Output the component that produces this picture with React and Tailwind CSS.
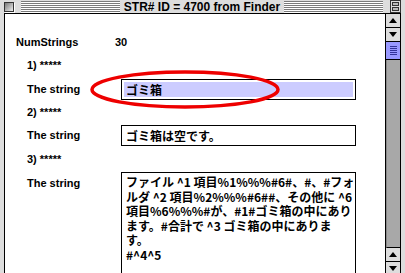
import React from 'react';

const font = { fontFamily: '"Liberation Sans", "Noto Sans CJK JP", sans-serif' };
const jp = { fontFamily: '"Noto Sans CJK JP", "Liberation Sans", sans-serif' };

const Stripes = () => (
  <div className="flex-1 h-[12px] bg-[repeating-linear-gradient(to_bottom,#7a7a7a_0px,#7a7a7a_1px,#ffffff_1px,#ffffff_2px)]" />
);

const Arrow = ({ up }) => (
  <div className="h-[14px] bg-[#dddddd] border-b border-black flex items-center justify-center">
    <svg width="8" height="5" viewBox="0 0 8 5">
      {up ? <polygon points="0,5 8,5 4,0" fill="#000" /> : <polygon points="0,0 8,0 4,5" fill="#000" />}
    </svg>
  </div>
);

const Field = ({ children, hilite, className = '' }) => (
  <div className={`w-[235px] border border-black bg-white ${className}`}>
    <div className={`m-[2px] px-[2px] ${hilite ? 'bg-[#ccccff]' : ''}`}>{children}</div>
  </div>
);

export default function App() {
  return (
    <div className="w-[405px] h-[273px] bg-[#dddddd] flex flex-col overflow-hidden text-black" style={font}>
      <div className="h-[20px] flex items-center pl-[4px] pr-[4px] gap-[3px]">
        <div className="w-[10px] h-[10px] border border-[#333] bg-[linear-gradient(135deg,#777,#eee)] mr-[4px] shadow-[1px_1px_0_#fff]" />
        <Stripes />
        <div className="text-[12px] font-bold leading-none px-[1px] whitespace-nowrap">STR# ID = 4700 from Finder</div>
        <Stripes />
        <svg width="11" height="13" viewBox="0 0 11 13" className="ml-[4px]">
          <rect x="0.5" y="0.5" width="10" height="12" fill="#ddd" stroke="#333" />
          <rect x="2.5" y="2.5" width="6" height="3" fill="#bbb" stroke="#333" />
          <rect x="2.5" y="7.5" width="6" height="3" fill="#bbb" stroke="#333" />
        </svg>
      </div>
      <div className="flex-1 flex ml-[4px] mr-[4px] mb-[5px] border border-black">
        <div className="flex-1 bg-white overflow-hidden text-[11px] font-bold">
          <div className="flex items-center mt-[21px] ml-[11px] h-[14px]">
            <span className="w-[99px]">NumStrings</span>
            <span>30</span>
          </div>
          <div className="ml-[22px] mt-[9px] h-[14px] flex items-center">1) *****</div>
          <div className="relative flex items-center ml-[22px] mt-[7px]">
            <span className="w-[94px]">The string</span>
            <Field hilite>
              <div className="text-[12px] leading-[15px]" style={jp}>ゴミ箱</div>
            </Field>
            <svg className="absolute left-[62px] top-[-10px]" width="192" height="41" viewBox="0 0 192 41">
              <ellipse cx="96" cy="20.5" rx="93" ry="17.5" fill="none" stroke="#ee0000" strokeWidth="3.5" />
            </svg>
          </div>
          <div className="ml-[22px] mt-[5px] h-[14px] flex items-center">2) *****</div>
          <div className="flex items-center ml-[22px] mt-[6px]">
            <span className="w-[94px]">The string</span>
            <Field>
              <div className="text-[12px] leading-[15px]" style={jp}>ゴミ箱は空です。</div>
            </Field>
          </div>
          <div className="ml-[22px] mt-[6px] h-[14px] flex items-center">3) *****</div>
          <div className="flex items-start ml-[22px] mt-[6px]">
            <span className="w-[94px] mt-[3px]">The string</span>
            <Field className="h-[120px] border-b-0">
              <div className="text-[12px] leading-[14.5px] whitespace-nowrap" style={jp}>
                <div>ファイル ^1 項目%1%%%#6#、#、#フォ</div>
                <div>ルダ ^2 項目%2%%%#6##、その他に ^6</div>
                <div>項目%6%%%#が、#1#ゴミ箱の中にあり</div>
                <div>ます。#合計で ^3 ゴミ箱の中にありま</div>
                <div>す。</div>
                <div>#^4^5</div>
              </div>
            </Field>
          </div>
        </div>
        <div className="w-[15px] border-l border-black flex flex-col">
          <Arrow up />
          <Arrow />
          <div className="h-[18px] bg-[#9999ff] border-b border-black flex flex-col items-center justify-center gap-[1px]">
            {[0, 1, 2, 3, 4].map((i) => (
              <div key={i} className="w-[7px] h-[1px] bg-[#333399]" />
            ))}
          </div>
          <div className="flex-1 bg-[#a8a8a8] border-l border-[#888] border-b border-b-black" />
          <Arrow up />
          <Arrow />
          <div className="flex-1 max-h-[16px] bg-[#dddddd] flex items-center justify-center">
            <svg width="11" height="11" viewBox="0 0 11 11">
              <line x1="1" y1="10" x2="10" y2="1" stroke="#888" />
              <line x1="4" y1="10" x2="10" y2="4" stroke="#888" />
              <line x1="7" y1="10" x2="10" y2="7" stroke="#888" />
              <line x1="2" y1="10" x2="10" y2="2" stroke="#fff" />
              <line x1="5" y1="10" x2="10" y2="5" stroke="#fff" />
            </svg>
          </div>
        </div>
      </div>
    </div>
  );
}
